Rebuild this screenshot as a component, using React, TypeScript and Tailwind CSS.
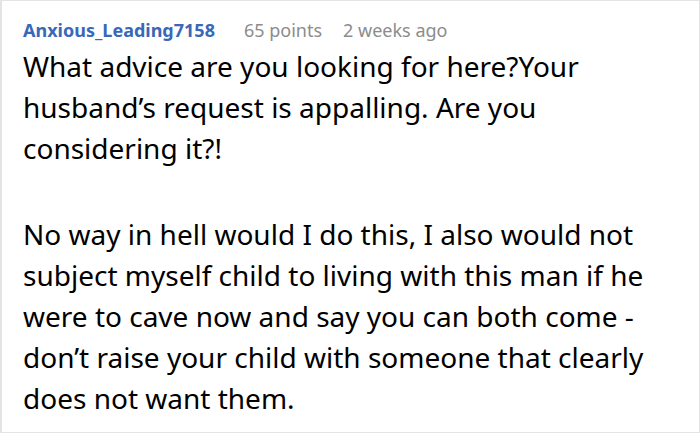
export default function App() {
  return (
    <div className="w-[700px] h-[433px] bg-white overflow-hidden" style={{ fontFamily: '"Noto Sans", sans-serif' }}>
      <div className="h-[433px] border-t border-r border-b border-l-2 border-[#e4e4e4] pl-[21px] pr-4 pt-[17px]">
        <div className="flex items-baseline text-[18px] leading-[24px] whitespace-nowrap">
          <span className="font-bold text-[#3a68b8]">Anxious_Leading7158</span>
          <span className="ml-[29px] text-[#8c8c8c]">65 points</span>
          <span className="ml-[21px] text-[#8c8c8c]">2 weeks ago</span>
        </div>
        <div className="mt-[4px] text-[28px] leading-[41px] text-black">
          <p>What advice are you looking for here?Your husband’s request is appalling. Are you considering it?!</p>
          <p className="mt-[45px]">No way in hell would I do this, I also would not subject myself child to living with this man if he were to cave now and say you can both come - don’t raise your child with someone that clearly does not want them.</p>
        </div>
      </div>
    </div>
  );
}
